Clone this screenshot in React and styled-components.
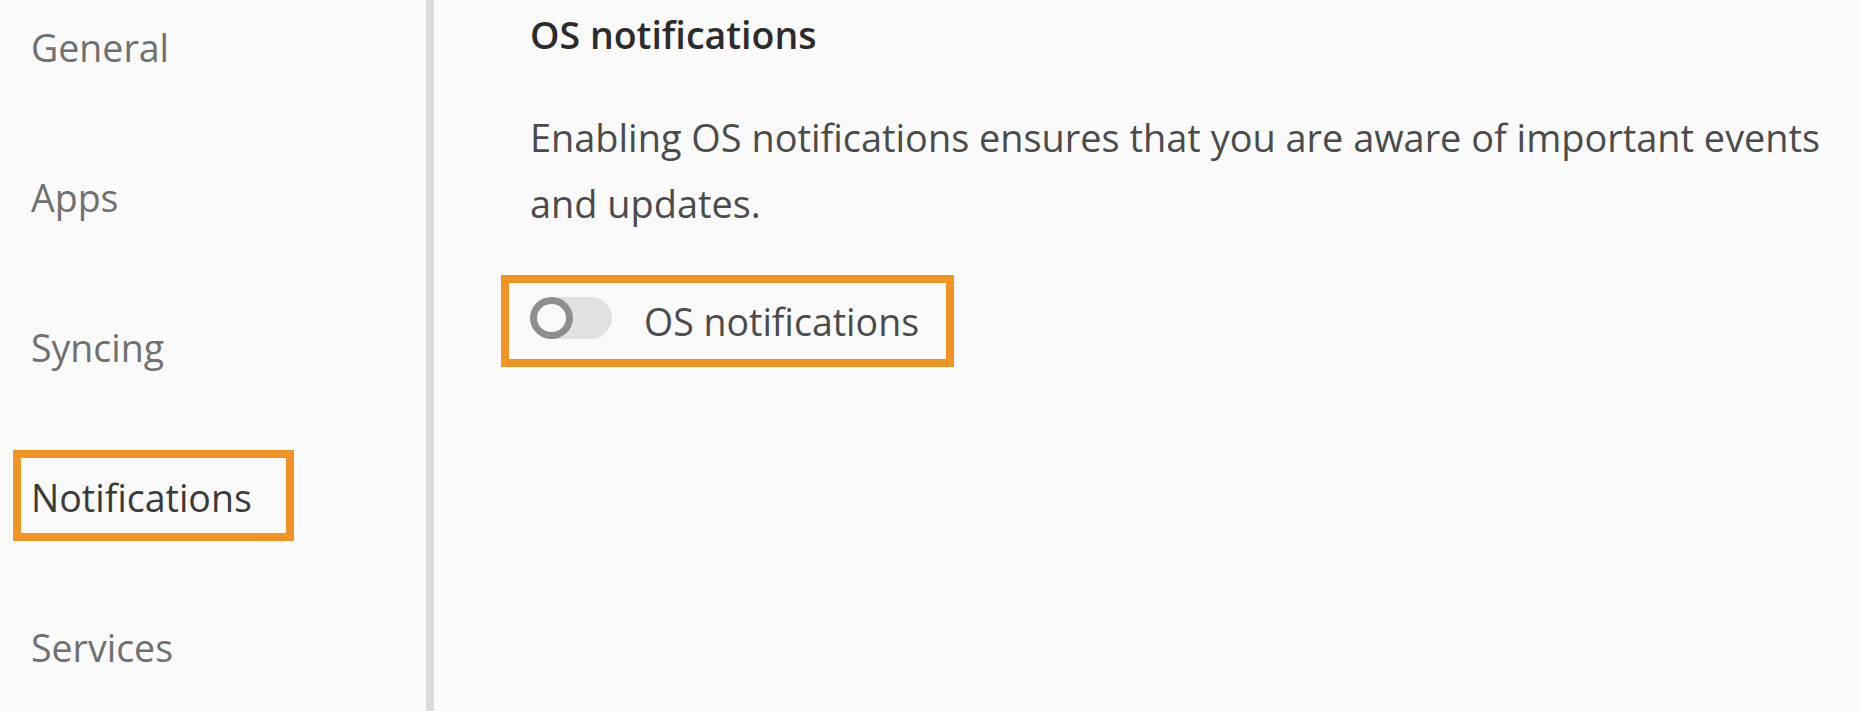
import React, { useState } from 'react';
import { styled, createGlobalStyle } from 'styled-components';

const GlobalStyle = createGlobalStyle`
  html, body {
    margin: 0;
    padding: 0;
    background: #fafafa;
  }
  body {
    font-family: 'Open Sans', 'Noto Sans', sans-serif;
  }
`;

const navItems = ['General', 'Apps', 'Syncing', 'Notifications', 'Services'];

const App = () => {
  const [osOn, setOsOn] = useState(false);

  return (
    <>
      <GlobalStyle />
      <StPage>
        <StSidebar>
          {navItems.map(item =>
            item === 'Notifications' ? (
              <StNavItem key={item} $active>
                <StMarked $pad="14px 34px 10px 10px" $margin="-22px -42px -18px -18px">
                  {item}
                </StMarked>
              </StNavItem>
            ) : (
              <StNavItem key={item}>{item}</StNavItem>
            )
          )}
        </StSidebar>
        <StContent>
          <StTitle>OS notifications</StTitle>
          <StText>
            Enabling OS notifications ensures that you are aware of important events
            <br />
            and updates.
          </StText>
          <StRowWrap>
            <StMarked $pad="6px 27px 12px 21px" $margin="-14px -35px -20px -29px">
              <StToggleRow onClick={() => setOsOn(!osOn)}>
                <StTrack $on={osOn}>
                  <StKnob $on={osOn} />
                </StTrack>
                <StLabel>OS notifications</StLabel>
              </StToggleRow>
            </StMarked>
          </StRowWrap>
        </StContent>
      </StPage>
    </>
  );
};

export default App;

const StPage = styled.div`
  display: flex;
  height: 100vh;
  background: #fafafa;
  overflow: hidden;
`;

const StSidebar = styled.nav`
  width: 434px;
  flex-shrink: 0;
  box-sizing: border-box;
  border-right: 8px solid #dcdcdc;
  display: flex;
  flex-direction: column;
  align-items: flex-start;
  gap: 99px;
  padding: 22px 0 0 31px;
`;

const StNavItem = styled.div`
  font-size: 37.5px;
  color: ${props => (props.$active ? '#3a3a3a' : '#707070')};
  line-height: normal;
`;

// 주황색 강조 박스 (레이아웃은 그대로 두고 테두리만 덧씌움)
const StMarked = styled.span`
  display: inline-flex;
  align-items: center;
  border: 8.5px solid #f29423;
  padding: ${props => props.$pad};
  margin: ${props => props.$margin};
`;

const StContent = styled.main`
  flex: 1;
  padding: 9px 0 0 96px;
`;

const StTitle = styled.h2`
  margin: 0;
  font-size: 37.5px;
  font-weight: 600;
  color: #2c2c2c;
  line-height: normal;
`;

const StText = styled.p`
  margin: 45px 0 0;
  font-size: 37.9px;
  line-height: 65.6px;
  color: #4b4b4b;
`;

const StRowWrap = styled.div`
  margin-top: 53px;
`;

const StToggleRow = styled.label`
  display: inline-flex;
  align-items: center;
  gap: 32px;
  cursor: pointer;
`;

const StTrack = styled.span`
  position: relative;
  width: 82px;
  height: 42px;
  border-radius: 21px;
  background: ${props => (props.$on ? '#378ef0' : '#e1e1e1')};
`;

const StKnob = styled.span`
  position: absolute;
  top: 0;
  left: ${props => (props.$on ? '40px' : '0')};
  width: 43px;
  height: 42px;
  box-sizing: border-box;
  border-radius: 50%;
  border: 7px solid ${props => (props.$on ? '#2680eb' : '#8e8e8e')};
  background: #fafafa;
`;

const StLabel = styled.span`
  font-size: 37.5px;
  color: #4b4b4b;
  line-height: normal;
  padding-top: 7px;
`;
